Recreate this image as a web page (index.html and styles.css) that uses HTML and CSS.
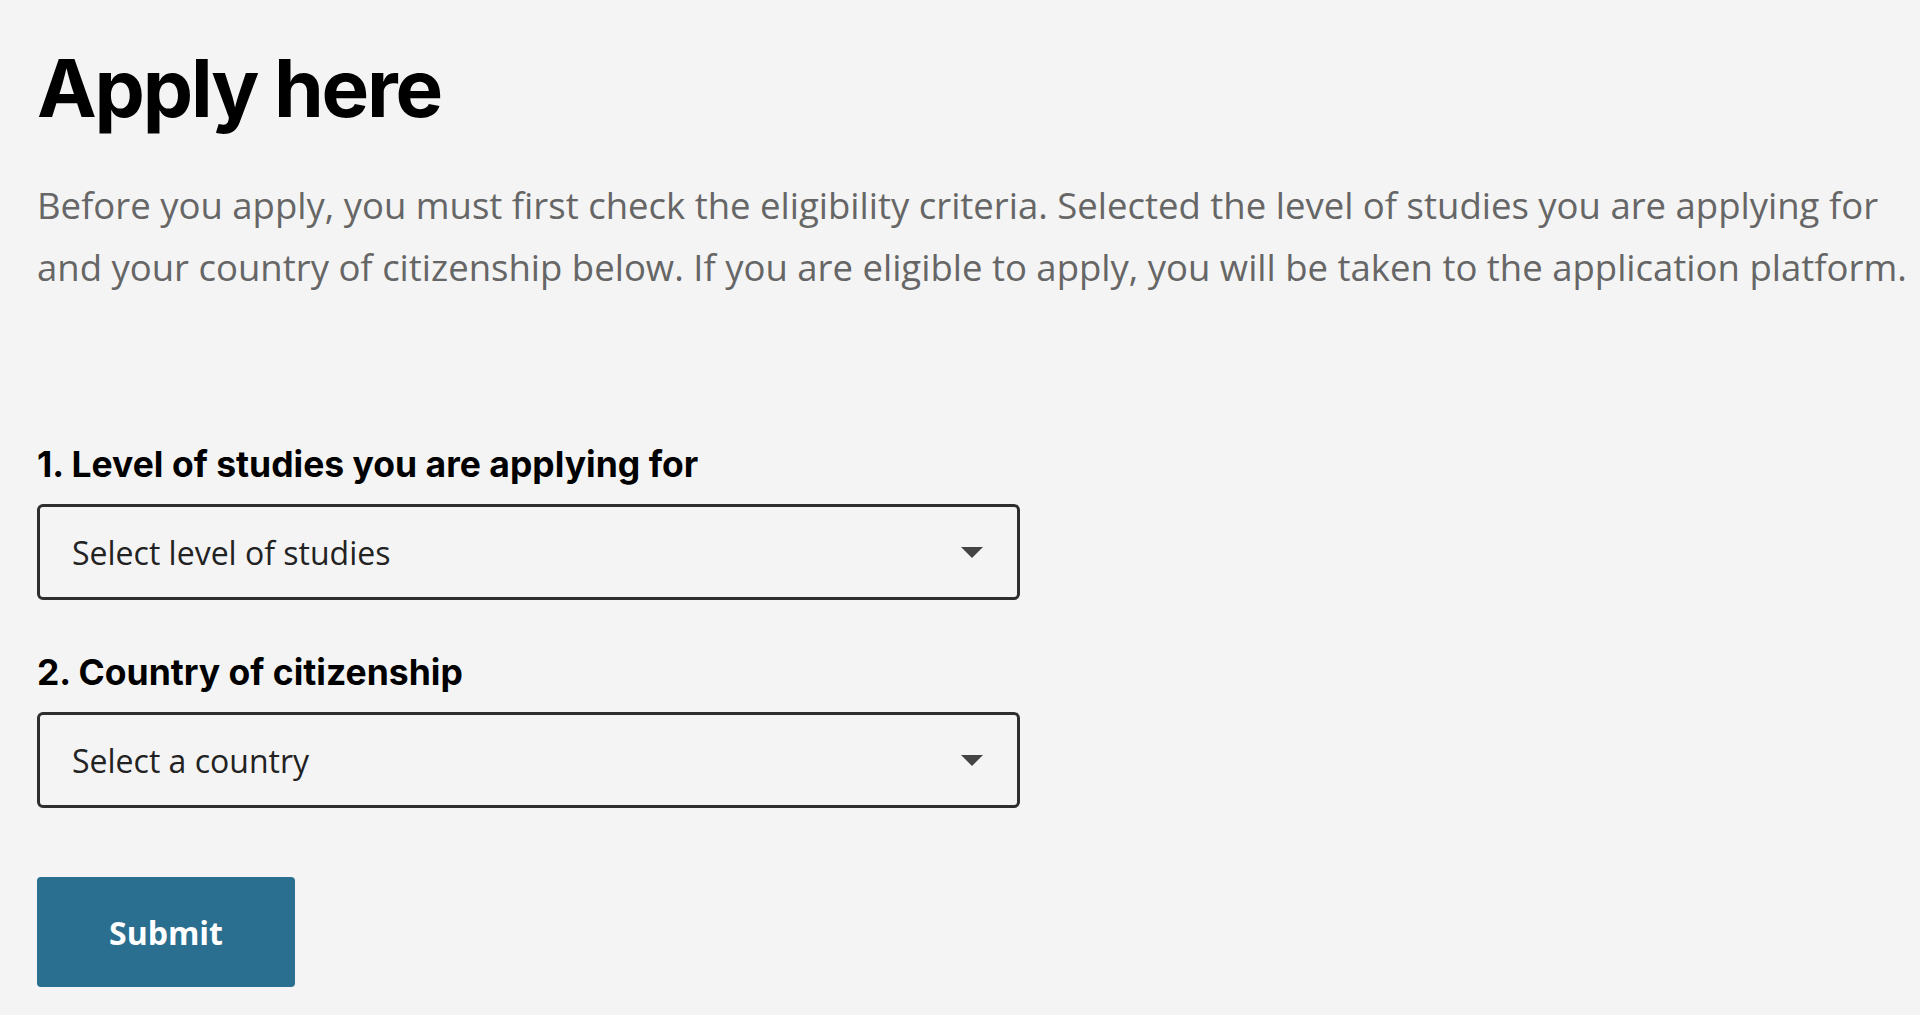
FILE: index.html
```html
<!DOCTYPE html>
<html lang="en">
<head>
<meta charset="utf-8">
<title>Apply here</title>
<link rel="stylesheet" href="styles.css">
</head>
<body>
<main class="page">
  <h1 class="title">Apply here</h1>
  <p class="intro">Before you apply, you must first check the eligibility criteria. Selected the level of studies you are applying for and your country of citizenship below. If you are eligible to apply, you will be taken to the application platform.</p>
  <form class="form">
    <label class="field-label" for="level">1. Level of studies you are applying for</label>
    <div class="select-wrap">
      <select id="level" class="select">
        <option>Select level of studies</option>
      </select>
      <svg class="caret" width="22" height="11" viewBox="0 0 22 11"><path d="M0 0H22L11 11Z" fill="#444"/></svg>
    </div>
    <label class="field-label second" for="country">2. Country of citizenship</label>
    <div class="select-wrap">
      <select id="country" class="select">
        <option>Select a country</option>
      </select>
      <svg class="caret" width="22" height="11" viewBox="0 0 22 11"><path d="M0 0H22L11 11Z" fill="#444"/></svg>
    </div>
    <button type="button" class="submit">Submit</button>
  </form>
</main>
</body>
</html>
```
FILE: styles.css
```css
html, body {
  margin: 0;
  padding: 0;
  background: #f4f4f4;
}
.page {
  padding: 40px 0 0 37px;
  display: flex;
  flex-direction: column;
  align-items: flex-start;
}
.title {
  margin: 0;
  font-family: Inter, "Liberation Sans", sans-serif;
  font-weight: 700;
  font-size: 80px;
  line-height: 96px;
  letter-spacing: -2.2px;
  color: #000;
}
.intro {
  margin: 38px 0 0 0;
  font-family: "Open Sans", sans-serif;
  font-size: 36.5px;
  line-height: 62px;
  color: #666;
  max-width: 1883px;
}
.form {
  margin-top: 147px;
  display: flex;
  flex-direction: column;
  align-items: flex-start;
}
.field-label {
  font-family: Inter, "Liberation Sans", sans-serif;
  font-weight: 700;
  font-size: 35.5px;
  line-height: 40px;
  letter-spacing: 0;
  color: #000;
}
.field-label.second {
  margin-top: 53px;
}
.select-wrap {
  position: relative;
  margin-top: 19px;
  width: 983px;
}
.select {
  appearance: none;
  -webkit-appearance: none;
  display: block;
  width: 983px;
  height: 96px;
  box-sizing: border-box;
  border: 3px solid #2e2e2e;
  border-radius: 6px;
  background: #f4f4f4;
  padding: 0 80px 0 32px;
  font-family: "Open Sans", sans-serif;
  font-size: 32px;
  color: #222;
}
.caret {
  position: absolute;
  right: 37px;
  top: 43px;
  pointer-events: none;
}
.submit {
  margin-top: 69px;
  width: 258px;
  height: 110px;
  border: none;
  border-radius: 4px;
  background: #2a6f8f;
  color: #fff;
  font-family: "Open Sans", sans-serif;
  font-weight: 700;
  font-size: 32px;
  cursor: pointer;
}
```
